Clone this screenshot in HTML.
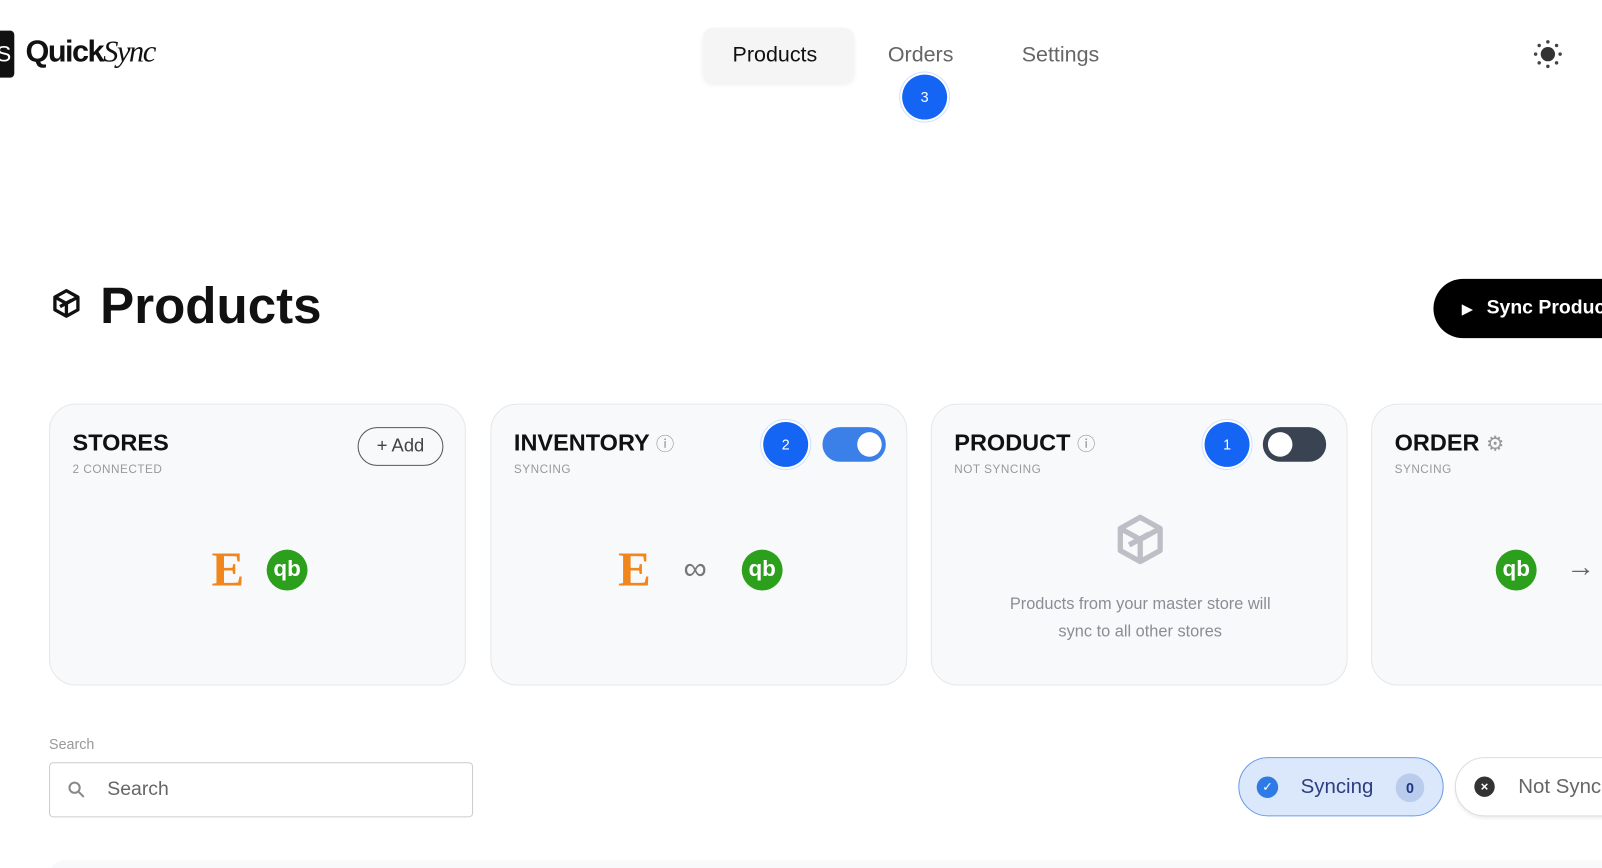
<!DOCTYPE html>
<html><head><meta charset="utf-8"><style>
*{box-sizing:border-box;margin:0;padding:0}
body{width:1602px;height:868px;background:#fff;font-family:"Liberation Sans",sans-serif;position:relative;overflow:hidden}
.clip{position:absolute;left:0;top:0;width:1568px;height:850px;overflow:hidden;transform:scale(1.0217);transform-origin:0 0}
.abs{position:absolute;white-space:nowrap}
.nav{font-size:21px;color:#666}
.card{position:absolute;top:395px;width:408px;height:276px;border:1px solid #e6e7ea;border-radius:26px;background:#f8f9fb}
.card h3{position:absolute;left:22px;top:24px;font-size:23px;font-weight:bold;color:#111;white-space:nowrap}
.card .sub{position:absolute;left:22px;top:58px;font-size:11.5px;color:#999;letter-spacing:.5px}
.badge{position:absolute;width:44px;height:44px;border-radius:50%;background:#1565f5;color:#fff;font-size:14px;text-align:center;line-height:44px;box-shadow:0 0 0 2px #fff,0 0 0 3px #cfe0ff}
.qb{position:absolute;width:40px;height:40px;border-radius:50%;background:#2ca01c;color:#fff;font-weight:bold;font-size:22px;text-align:center;line-height:38px}
.etsy{position:absolute;font-family:"Liberation Serif",serif;font-weight:bold;color:#f1861d;font-size:48px}
.tog{position:absolute;width:62px;height:34px;border-radius:17px}
.tog i{position:absolute;top:5px;width:24px;height:24px;border-radius:50%;background:#fff}
</style></head><body><div class="clip">
<div class="abs" style="left:-6px;top:30px;width:20px;height:46px;background:#111;border-radius:4px;color:#fff;font-size:22px;line-height:46px;text-align:right;padding-right:3px">S</div>
<div class="abs" style="left:25px;top:34px;font-size:30px;font-weight:bold;color:#111;letter-spacing:-1.5px">Quick<span style="font-family:'Liberation Serif',serif;font-style:italic;font-weight:normal">Sync</span></div>
<div class="abs" style="left:688px;top:27px;width:148px;height:54px;background:#f5f5f6;border-radius:10px;box-shadow:0 2px 4px rgba(0,0,0,.06)"></div>
<div class="abs nav" style="left:717px;top:42px;color:#111">Products</div>
<div class="abs nav" style="left:869px;top:42px">Orders</div>
<div class="abs nav" style="left:1000px;top:42px">Settings</div>
<div class="badge" style="left:883px;top:73px">3</div>
<svg class="abs" style="left:1500px;top:38px" width="30" height="30" viewBox="0 0 30 30"><circle cx="15" cy="15" r="7" fill="#333"/><g fill="#444"><circle cx="15" cy="3" r="1.7"/><circle cx="15" cy="27" r="1.7"/><circle cx="3" cy="15" r="1.7"/><circle cx="27" cy="15" r="1.7"/><circle cx="6.5" cy="6.5" r="1.7"/><circle cx="23.5" cy="6.5" r="1.7"/><circle cx="6.5" cy="23.5" r="1.7"/><circle cx="23.5" cy="23.5" r="1.7"/></g></svg>
<svg class="abs" style="left:50px;top:282px" width="30" height="30" viewBox="0 0 24 24" fill="none" stroke="#111" stroke-width="2.6" stroke-linejoin="round"><path d="M12 2 21 7v10l-9 5-9-5V7z"/><path d="M3 7l9 5 9-5M12 12v10M7 14.5l9-5"/></svg>
<div class="abs" style="left:98px;top:270px;font-size:50px;font-weight:bold;color:#111">Products</div>
<div class="abs" style="left:1403px;top:273px;width:220px;height:58px;background:#000;border-radius:29px;color:#fff;font-size:19px;font-weight:bold;line-height:58px;padding-left:28px"><span style="font-size:13px;margin-right:14px">&#9654;</span>Sync Products</div>

<div class="card" style="left:48px"><h3>STORES</h3><div class="sub">2 CONNECTED</div>
<div class="abs" style="left:301px;top:22px;width:84px;height:38px;border:1.5px solid #555;border-radius:19px;font-size:18px;color:#444;line-height:35px;text-align:center">+ Add</div>
<div class="etsy" style="left:158px;top:134px">E</div><div class="qb" style="left:212px;top:142px">qb</div></div>

<div class="card" style="left:480px"><h3>INVENTORY <span style="font-weight:normal;color:#999;font-size:18px">&#9432;</span></h3><div class="sub">SYNCING</div>
<div class="badge" style="left:266px;top:17px">2</div>
<div class="tog" style="left:324px;top:22px;background:#3b7fe8"><i style="right:4px"></i></div>
<div class="etsy" style="left:124px;top:134px">E</div>
<div class="abs" style="left:188px;top:142px;font-size:32px;color:#777">∞</div>
<div class="qb" style="left:245px;top:142px">qb</div></div>

<div class="card" style="left:911px"><h3>PRODUCT <span style="font-weight:normal;color:#999;font-size:18px">&#9432;</span></h3><div class="sub">NOT SYNCING</div>
<div class="badge" style="left:267px;top:17px">1</div>
<div class="tog" style="left:324px;top:22px;background:#3a4351"><i style="left:5px"></i></div>
<svg class="abs" style="left:178px;top:106px" width="52" height="52" viewBox="0 0 24 24" fill="none" stroke="#bcc0c6" stroke-width="2.4" stroke-linejoin="round"><path d="M12 2 21 7v10l-9 5-9-5V7z"/><path d="M3 7l9 5 9-5M12 12v10M7 14.5l9-5"/></svg>
<div class="abs" style="left:0;width:408px;top:182px;text-align:center;font-size:16px;line-height:27px;color:#8a8d93">Products from your master store will<br>sync to all other stores</div></div>

<div class="card" style="left:1342px"><h3>ORDER <span style="font-weight:normal;color:#999;font-size:20px">&#9881;</span></h3><div class="sub">SYNCING</div>
<div class="qb" style="left:121px;top:142px">qb</div>
<div class="abs" style="left:190px;top:143px;font-size:28px;color:#666">&#8594;</div></div>

<div class="abs" style="left:48px;top:720px;font-size:14px;color:#999">Search</div>
<div class="abs" style="left:48px;top:746px;width:415px;height:54px;border:1px solid #ccc;border-radius:4px;font-size:19px;color:#666;line-height:52px;padding-left:56px">Search</div>
<svg class="abs" style="left:66px;top:764px" width="18" height="18" viewBox="0 0 18 18" fill="none" stroke="#888" stroke-width="2"><circle cx="7" cy="7" r="5"/><path d="M11 11l5 5"/></svg>
<div class="abs" style="left:1212px;top:741px;width:201px;height:58px;border:1.5px solid #6a9be6;border-radius:29px;background:#dbe8fb"></div>
<div class="abs" style="left:1230px;top:760px;width:21px;height:21px;border-radius:50%;background:#2f7be6;color:#fff;font-size:12px;text-align:center;line-height:21px">✓</div>
<div class="abs" style="left:1273px;top:759px;font-size:20px;color:#2e3d80">Syncing</div>
<div class="abs" style="left:1366px;top:757px;width:28px;height:28px;border-radius:50%;background:#b9ccee;color:#1f3580;font-size:14px;font-weight:bold;text-align:center;line-height:28px">0</div>
<div class="abs" style="left:1424px;top:741px;width:220px;height:58px;border:1px solid #ddd;border-radius:29px;background:#fff;box-shadow:0 2px 3px rgba(0,0,0,.08)"></div>
<div class="abs" style="left:1443px;top:760px;width:20px;height:20px;border-radius:50%;background:#333;color:#fff;font-size:13px;text-align:center;line-height:20px;font-weight:bold">×</div>
<div class="abs" style="left:1486px;top:759px;font-size:20px;color:#666">Not Syncing</div>
<div class="abs" style="left:48px;top:842px;width:1600px;height:30px;background:#f8f9fb;border-radius:20px"></div>
</div></body></html>
